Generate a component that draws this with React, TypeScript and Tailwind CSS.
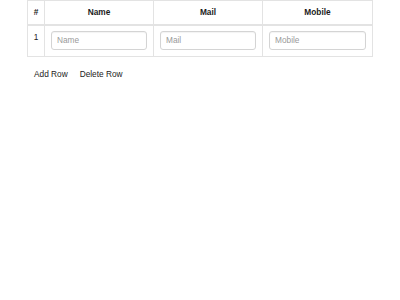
import { useState } from "react";

type Row = { name: string; mail: string; mobile: string };

export default function App() {
	const [rows, setRows] = useState<Row[]>([{ name: "", mail: "", mobile: "" }]);

	const addRow = () => setRows((prev) => [...prev, { name: "", mail: "", mobile: "" }]);
	const deleteRow = () => setRows((prev) => (prev.length > 1 ? prev.slice(0, -1) : prev));

	const update = (i: number, key: keyof Row, value: string) =>
		setRows((prev) => prev.map((r, idx) => (idx === i ? { ...r, [key]: value } : r)));

	return (
		<div className="min-h-[300px] w-[400px] bg-white pl-[27px] font-['Liberation_Sans',Arial,sans-serif] text-[8.3px] text-[#1a1a1a]">
			{/* Table */}
			<table className="w-[346px] table-fixed border-collapse border border-[#e3e3e3]">
				<colgroup>
					<col className="w-[17px]" />
					<col className="w-[109px]" />
					<col className="w-[109px]" />
					<col className="w-[110px]" />
				</colgroup>
				<thead>
					<tr className="h-[24px]">
						<th className="border border-b-2 border-[#e3e3e3] text-center font-bold">#</th>
						<th className="border border-b-2 border-[#e3e3e3] text-center font-bold">Name</th>
						<th className="border border-b-2 border-[#e3e3e3] text-center font-bold">Mail</th>
						<th className="border border-b-2 border-[#e3e3e3] text-center font-bold">Mobile</th>
					</tr>
				</thead>
				<tbody>
					{rows.map((row, i) => (
						<tr key={i}>
							<td className="border border-[#e3e3e3] pt-[5px] text-center align-top leading-[12px]">{i + 1}</td>
							{(["name", "mail", "mobile"] as const).map((key) => (
								<td key={key} className="border border-[#e3e3e3] px-[6px] pt-[5px] pb-[6px]">
									<input
										value={row[key]}
										onChange={(e) => update(i, key, e.target.value)}
										placeholder={key === "name" ? "Name" : key === "mail" ? "Mail" : "Mobile"}
										className="block h-[19px] w-full rounded-[3px] border border-[#d4d4d4] px-[5px] text-[8.3px] outline-none shadow-[inset_0_1px_1px_rgba(0,0,0,0.05)] placeholder:text-[#9a9a9a]"
									/>
								</td>
							))}
						</tr>
					))}
				</tbody>
			</table>

			{/* Actions */}
			<div className="mt-[8px] flex text-[#222]">
				<button onClick={addRow} className="px-[7px] py-[3px] leading-[12px]">
					Add Row
				</button>
				<button onClick={deleteRow} className="px-[5px] py-[3px] leading-[12px]">
					Delete Row
				</button>
			</div>
		</div>
	);
}
